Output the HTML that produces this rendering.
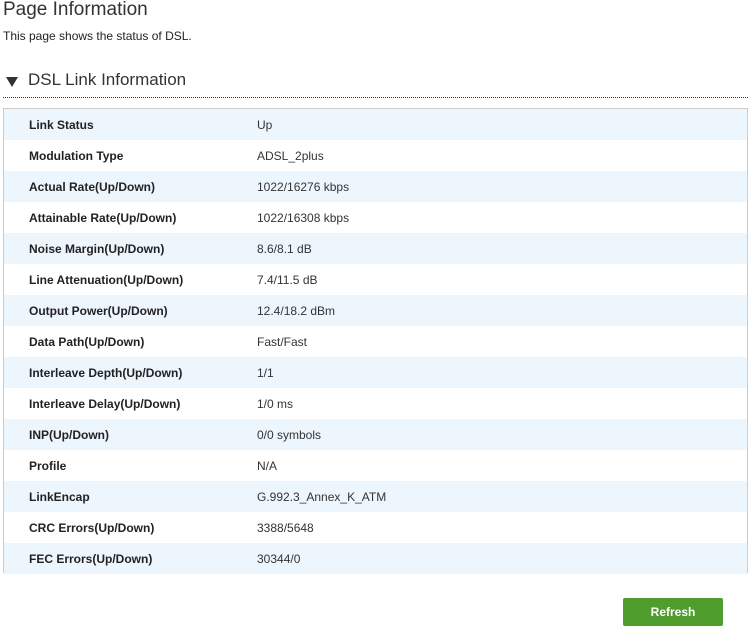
<!DOCTYPE html>
<html><head><style>
body{margin:0;background:#fff;font-family:"Liberation Sans",Arial,sans-serif;color:#333;width:754px;height:634px;overflow:hidden;position:relative}
.h1{position:absolute;left:3px;top:-1px;font-size:19px;color:#333}
.sub{position:absolute;left:3px;top:29px;font-size:12px;color:#222}
.h2{position:absolute;left:28px;top:70px;font-size:17px;color:#333}
.tri{position:absolute;left:6px;top:77px;width:0;height:0;border-left:6px solid transparent;border-right:6px solid transparent;border-top:10px solid #333}
.line{position:absolute;left:3px;top:97px;width:745px;border-top:1px dotted #333}
.box{position:absolute;left:3px;top:108px;width:743px;height:463px;border:1px solid #ccc}
.row{height:31px;position:relative;font-size:12px}
.row:nth-child(odd){background:#eef6fd}
.l{position:absolute;left:25px;top:9px;font-weight:bold;color:#222}
.v{position:absolute;left:253px;top:9px;color:#333}
.btn{position:absolute;left:623px;top:598px;width:100px;height:28px;background:#4e9d2d;border-radius:2px;color:#fff;font-size:12px;font-weight:bold;text-align:center;line-height:28px}
</style></head><body>
<div class="h1">Page Information</div>
<div class="sub">This page shows the status of DSL.</div>
<div class="tri"></div><div class="h2">DSL Link Information</div>
<div class="line"></div>
<div class="box">
<div class="row"><span class="l">Link Status</span><span class="v">Up</span></div>
<div class="row"><span class="l">Modulation Type</span><span class="v">ADSL_2plus</span></div>
<div class="row"><span class="l">Actual Rate(Up/Down)</span><span class="v">1022/16276 kbps</span></div>
<div class="row"><span class="l">Attainable Rate(Up/Down)</span><span class="v">1022/16308 kbps</span></div>
<div class="row"><span class="l">Noise Margin(Up/Down)</span><span class="v">8.6/8.1 dB</span></div>
<div class="row"><span class="l">Line Attenuation(Up/Down)</span><span class="v">7.4/11.5 dB</span></div>
<div class="row"><span class="l">Output Power(Up/Down)</span><span class="v">12.4/18.2 dBm</span></div>
<div class="row"><span class="l">Data Path(Up/Down)</span><span class="v">Fast/Fast</span></div>
<div class="row"><span class="l">Interleave Depth(Up/Down)</span><span class="v">1/1</span></div>
<div class="row"><span class="l">Interleave Delay(Up/Down)</span><span class="v">1/0 ms</span></div>
<div class="row"><span class="l">INP(Up/Down)</span><span class="v">0/0 symbols</span></div>
<div class="row"><span class="l">Profile</span><span class="v">N/A</span></div>
<div class="row"><span class="l">LinkEncap</span><span class="v">G.992.3_Annex_K_ATM</span></div>
<div class="row"><span class="l">CRC Errors(Up/Down)</span><span class="v">3388/5648</span></div>
<div class="row"><span class="l">FEC Errors(Up/Down)</span><span class="v">30344/0</span></div>
</div>
<div class="btn">Refresh</div>
</body></html>
